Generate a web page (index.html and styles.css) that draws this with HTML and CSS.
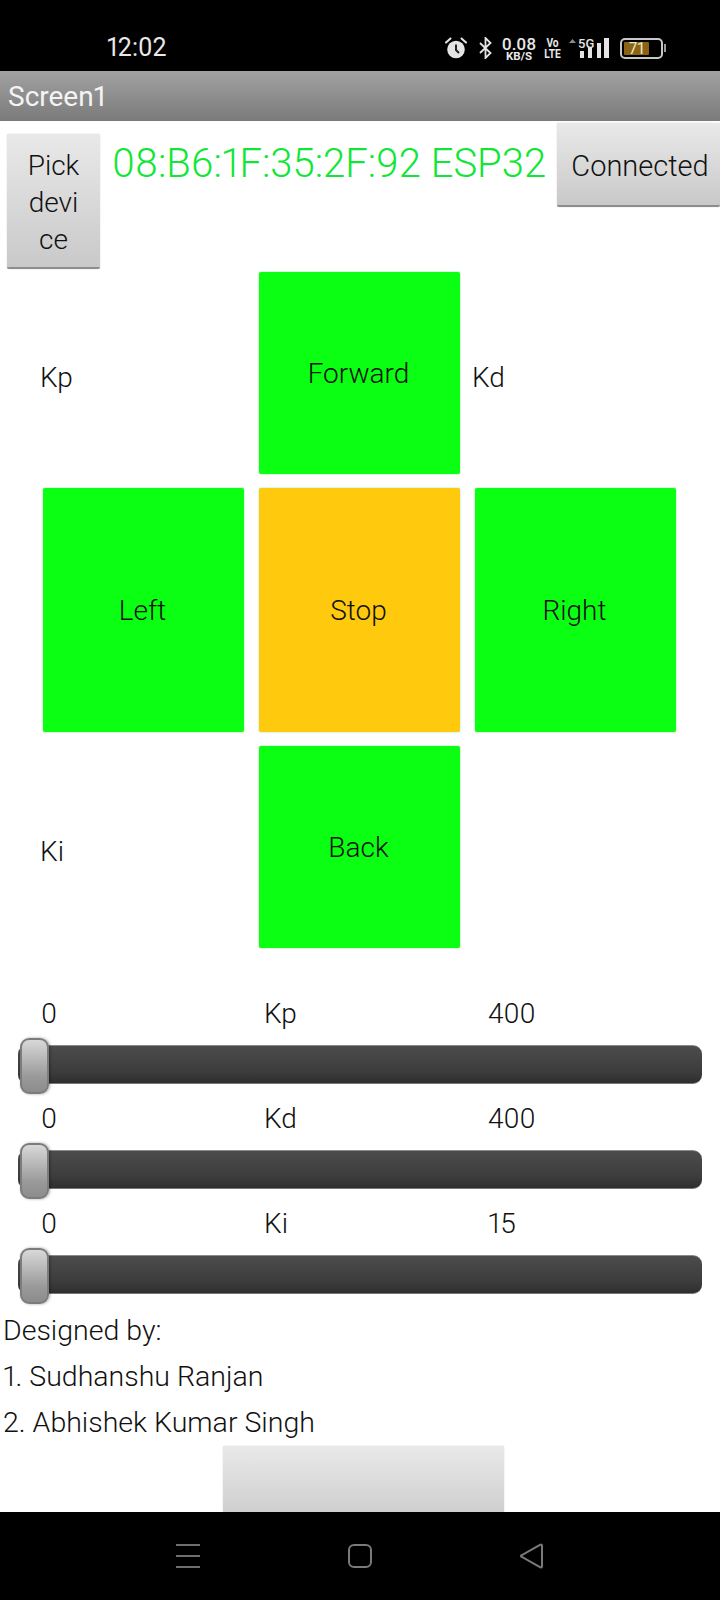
FILE: index.html
```html
<!DOCTYPE html>
<html lang="en">
<head>
    <meta charset="UTF-8">
    <meta name="viewport" content="width=device-width, initial-scale=1.0">
    <title>Screen1</title>
    <link rel="stylesheet" href="styles.css">
</head>
<body>
    <div class="phone">
        <div class="status-bar">
            <span class="clock">12:02</span>
            <div class="status-icons">
                <svg class="icon-alarm" width="22" height="22" viewBox="0 0 22 22">
                    <circle cx="11" cy="12.5" r="8.8" fill="#e4e4e4"/>
                    <path d="M11 7.5V13l3 3" fill="none" stroke="#222" stroke-width="2"/>
                    <path d="M1 5.5L5.5 1.5M21 5.5L16.5 1.5" stroke="#e4e4e4" stroke-width="2" stroke-linecap="round"/>
                </svg>
                <svg class="icon-bt" width="13" height="22" viewBox="0 0 13 22">
                    <path d="M1 6l10.5 10L6.5 21V1l5 5L1 16" fill="none" stroke="#e4e4e4" stroke-width="1.8"/>
                </svg>
                <div class="speed">
                    <span class="speed-num">0.08</span>
                    <span class="speed-unit">KB/S</span>
                </div>
                <div class="volte">
                    <span>Vo</span>
                    <span>LTE</span>
                </div>
                <svg class="icon-signal" width="41" height="22" viewBox="0 0 41 22">
                    <path d="M0 6l3.500-4L7 6z" fill="#8a8a8a"/>
                    <text x="9" y="10.500" class="signal-text">5G</text>
                    <rect x="11" y="14" width="4" height="7" fill="#e4e4e4"/>
                    <rect x="19" y="10" width="4" height="11" fill="#e4e4e4"/>
                    <rect x="28" y="6" width="4" height="15" fill="#e4e4e4"/>
                    <rect x="35" y="1" width="5" height="20" fill="#e4e4e4"/>
                </svg>
                <div class="battery">
                    <div class="battery-body">
                        <span class="battery-level">71</span>
                    </div>
                    <span class="battery-nub"></span>
                </div>
            </div>
        </div>

        <div class="title-bar">Screen1</div>

        <div class="content">
            <div class="top-row">
                <button class="btn pick-btn">Pick devi ce</button>
                <span class="device">08:B6:1F:35:2F:92 ESP32</span>
                <button class="btn connect-btn">Connected</button>
            </div>

            <div class="pad">
                <span class="pad-label">Kp</span>
                <div class="key key-go">Forward</div>
                <span class="pad-label">Kd</span>

                <div class="key key-go key-left">Left</div>
                <div class="key key-stop">Stop</div>
                <div class="key key-go key-right">Right</div>

                <span class="pad-label">Ki</span>
                <div class="key key-go">Back</div>
            </div>

            <div class="sliders">
                <div class="slider-group">
                    <div class="slider-labels"><span>0</span><span>Kp</span><span>400</span></div>
                    <div class="track"><span class="thumb"></span></div>
                </div>
                <div class="slider-group">
                    <div class="slider-labels"><span>0</span><span>Kd</span><span>400</span></div>
                    <div class="track"><span class="thumb"></span></div>
                </div>
                <div class="slider-group">
                    <div class="slider-labels"><span>0</span><span>Ki</span><span>15</span></div>
                    <div class="track"><span class="thumb"></span></div>
                </div>
            </div>

            <div class="credits">
                <p>Designed by:</p>
                <p>1. Sudhanshu Ranjan</p>
                <p>2. Abhishek Kumar Singh</p>
            </div>

            <button class="btn bottom-btn"></button>
        </div>

        <div class="nav-bar">
            <svg width="26" height="26" viewBox="0 0 26 26">
                <path d="M1 2h24M1 13h24M1 24h24" stroke="#6e6e6e" stroke-width="2"/>
            </svg>
            <svg width="26" height="26" viewBox="0 0 26 26">
                <rect x="2" y="2" width="22" height="22" rx="5" fill="none" stroke="#7a7a7a" stroke-width="2"/>
            </svg>
            <svg width="26" height="26" viewBox="0 0 26 26">
                <path d="M23 2.500V23.500a1 1 0 0 1-1.600.8L3 14a1 1 0 0 1 0-2L21.400 1.700a1 1 0 0 1 1.600.8z" fill="none" stroke="#7a7a7a" stroke-width="2"/>
            </svg>
        </div>
    </div>
</body>
</html>
```

FILE: styles.css
```css
* {
    box-sizing: border-box;
}

body {
    margin: 0;
    background: white;
    font-family: Roboto, sans-serif;
    font-weight: 300;
    font-variant-numeric: proportional-nums;
    color: #111;
}

.phone {
    width: 720px;
    height: 1600px;
    display: flex;
    flex-direction: column;
    overflow: hidden;
}

/* status bar */
.status-bar {
    height: 71px;
    flex: none;
    background: black;
    color: #e8e8e8;
    display: flex;
    padding: 36px 0 0 107px;
}

.clock {
    width: 62px;
    font-size: 25px;
    font-weight: 400;
    line-height: 24px;
}

.status-icons {
    display: flex;
    align-items: flex-start;
    margin-left: 276px;
    height: 24px;
    padding-top: 1px;
}

.icon-bt {
    margin-left: 12px;
}

.speed {
    margin-left: 10px;
    width: 34px;
    display: flex;
    flex-direction: column;
    align-items: center;
    font-weight: 500;
}

.speed-num {
    font-size: 17px;
    line-height: 14px;
}

.speed-unit {
    font-size: 11.500px;
    line-height: 10px;
    font-weight: 700;
}

.volte {
    margin-left: 9px;
    width: 15px;
    display: flex;
    flex-direction: column;
    align-items: center;
    font-size: 12px;
    font-weight: 700;
    line-height: 11px;
    padding-top: 1px;
    transform: scaleX(0.85);
}

.icon-signal {
    margin-left: 9px;
}

.signal-text {
    font-family: Roboto, sans-serif;
    font-size: 13px;
    font-weight: 500;
    fill: #e4e4e4;
}

.battery {
    margin-left: 10px;
    display: flex;
    align-items: center;
    height: 22px;
}

.battery-body {
    width: 43px;
    height: 21px;
    border: 2px solid #c8c8c8;
    border-radius: 5px;
    padding: 2px 12px 2px 2px;
}

.battery-level {
    display: block;
    height: 13px;
    background: #8a6414;
    color: #f2e6c4;
    font-size: 16px;
    font-weight: 400;
    line-height: 13px;
    text-align: center;
    border-radius: 1px;
}

.battery-nub {
    width: 2px;
    height: 8px;
    margin-left: 1px;
    background: #9a9a9a;
}

/* app title */
.title-bar {
    height: 50px;
    flex: none;
    padding-left: 8px;
    background: linear-gradient(to bottom, #a2a2a2, #7a7a7a);
    color: #f4f4f4;
    font-size: 28px;
    font-weight: 400;
    line-height: 52px;
}

.content {
    flex: 1;
    min-height: 0;
    overflow: hidden;
}

.btn {
    display: block;
    border: none;
    border-bottom: 2px solid #8d8d8d;
    border-radius: 2px;
    padding: 0;
    background: linear-gradient(to bottom, #e9e9e9, #c9c9c9);
    box-shadow: 0 0 1px #999;
    font-family: Roboto, sans-serif;
    font-weight: 300;
    font-size: 28px;
    color: #111;
}

.top-row {
    display: flex;
    align-items: flex-start;
    height: 151px;
}

.pick-btn {
    width: 93px;
    height: 135px;
    margin: 13px 0 0 7px;
    line-height: 37px;
    padding: 3px 14px 0;
    word-break: break-all;
}

.device {
    margin: 21px 0 0 12px;
    width: 445px;
    color: #10e636;
    font-size: 40px;
    font-weight: 300;
    line-height: 44px;
    white-space: nowrap;
}

.connect-btn {
    width: 163px;
    height: 84px;
    margin-top: 2px;
    padding: 3px 0 0 3px;
    font-size: 29px;
    text-align: center;
}

/* direction pad */
.pad {
    display: grid;
    grid-template-columns: 207px 201px 204px;
    grid-template-rows: 202px 244px 202px;
    gap: 14px 12px;
    padding-left: 40px;
}

.pad-label {
    font-size: 28px;
    align-self: center;
    padding-top: 9px;
}

.key {
    display: flex;
    align-items: center;
    justify-content: center;
    padding: 0 2px 0 0;
    border-radius: 2px;
    font-size: 28px;
    font-weight: 300;
    box-shadow: 0 0 2px rgba(80, 200, 80, 0.6);
}

.key-go {
    background: #0aff12;
}

.key-stop {
    background: #ffc90e;
}

.key-left {
    margin: 0 3px 0 3px;
}

.key-right {
    margin-left: 3px;
}

/* sliders */
.sliders {
    margin-top: 50px;
}

.slider-group {
    margin-bottom: 19px;
}

.slider-labels {
    display: grid;
    grid-template-columns: 223px 224px auto;
    padding-left: 41px;
    height: 30px;
    font-size: 28px;
    line-height: 32px;
}

.track {
    position: relative;
    height: 39px;
    margin: 17px 18px 0;
    border-radius: 9px;
    border-top: 1px solid #8a8a8a;
    border-bottom: 1px solid #777;
    background: linear-gradient(to bottom, #4c4c4c, #3c3c3c 70%, #2e2e2e);
}

.thumb {
    position: absolute;
    left: 2px;
    top: -8px;
    width: 29px;
    height: 56px;
    border: 2px solid #7c7c7c;
    border-radius: 9px;
    background: linear-gradient(to bottom, #d8d8d8, #9a9a9a 70%, #8c8c8c);
    box-shadow: 1px 0 3px rgba(0, 0, 0, 0.35);
}

/* credits */
.credits {
    margin-top: -5px;
    padding-left: 3px;
}

.credits p {
    margin: 0;
    font-size: 28.500px;
    line-height: 46px;
}

.bottom-btn {
    width: 281px;
    height: 84px;
    margin-left: 223px;
}

/* system nav */
.nav-bar {
    height: 88px;
    flex: none;
    background: black;
    display: flex;
    align-items: center;
    justify-content: center;
    gap: 146px;
    padding-bottom: 1px;
}
```
